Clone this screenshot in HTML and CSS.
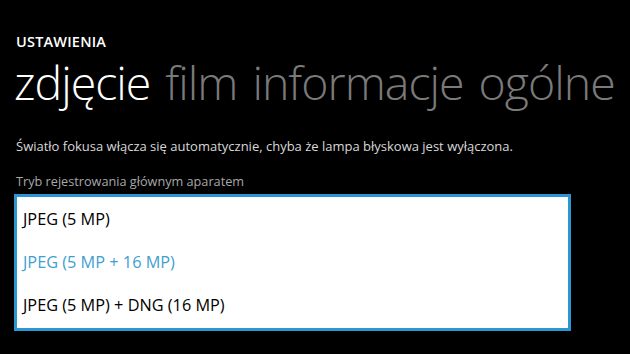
FILE: index.html
```html
<!DOCTYPE html>
<html lang="pl">
<head>
  <meta charset="UTF-8" />
  <meta name="viewport" content="width=device-width, initial-scale=1.0"/>
  <title>Ustawienia</title>
  <link rel="stylesheet" href="styles.css">
</head>
<body>
  <div class="page">
    <div class="app-title">USTAWIENIA</div>
    <div class="pivot">
      <span class="pivot-item active">zdjęcie</span>
      <span class="pivot-item">film</span>
      <span class="pivot-item">informacje</span>
      <span class="pivot-item">ogólne</span>
    </div>
    <p class="hint">Światło fokusa włącza się automatycznie, chyba że lampa błyskowa jest wyłączona.</p>
    <div class="field-label">Tryb rejestrowania głównym aparatem</div>
    <!-- opened list picker -->
    <ul class="picker">
      <li>JPEG (5 MP)</li>
      <li class="selected">JPEG (5 MP + 16 MP)</li>
      <li>JPEG (5 MP) + DNG (16 MP)</li>
    </ul>
  </div>
</body>
</html>
```

FILE: styles.css
```css
* {
  box-sizing: border-box;
}
body {
  margin: 0;
  background: #000;
  color: #fff;
  font-family: 'Open Sans', 'Noto Sans', sans-serif;
  width: 630px;
  height: 354px;
  overflow: hidden;
}
.page {
  padding: 33px 0 0 16px;
}
.app-title {
  font-size: 14.5px;
  font-weight: 600;
  line-height: 18px;
  letter-spacing: 0.2px;
}
.pivot {
  display: flex;
  gap: 15px;
  margin-top: 2px;
  margin-left: -2px;
  white-space: nowrap;
}
.pivot-item {
  font-size: 46.5px;
  font-weight: 300;
  line-height: 58px;
  letter-spacing: -1px;
  color: #7a7a7a;
}
.pivot-item.active {
  color: #fff;
}
.hint {
  margin: 25px 0 0;
  font-size: 13px;
  line-height: 20px;
  color: #d8d8d8;
}
.field-label {
  margin-top: 15px;
  font-size: 12.7px;
  line-height: 20px;
  color: #a8a8a8;
}
.picker {
  list-style: none;
  margin: 3px 0 0 -2px;
  padding: 0 6px;
  width: 557px;
  height: 137px;
  background: #fff;
  border: 3px solid #2b96d0;
}
.picker li {
  height: 43px;
  line-height: 43px;
  font-size: 16.3px;
  color: #000;
  padding-top: 1px;
}
.picker li.selected {
  color: #3f9fd0;
}
```
